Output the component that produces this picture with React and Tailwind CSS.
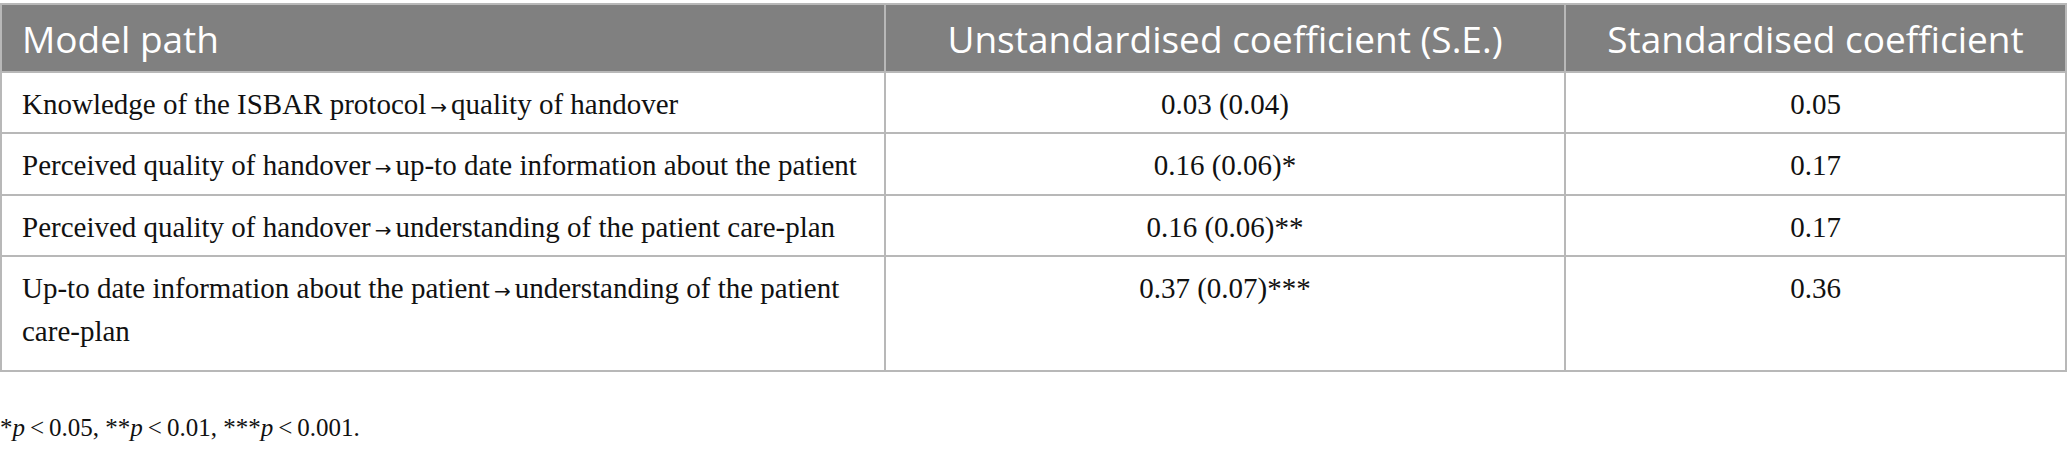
export default function App() {
  const rows = [
    {
      from: "Knowledge of the ISBAR protocol",
      to: "quality of handover",
      coef: "0.03 (0.04)",
      std: "0.05",
      h: "h-[61px]",
    },
    {
      from: "Perceived quality of handover",
      to: "up-to date information about the patient",
      coef: "0.16 (0.06)*",
      std: "0.17",
      h: "h-[62px]",
    },
    {
      from: "Perceived quality of handover",
      to: "understanding of the patient care-plan",
      coef: "0.16 (0.06)**",
      std: "0.17",
      h: "h-[61px]",
    },
    {
      from: "Up-to date information about the patient",
      to: "understanding of the patient care-plan",
      coef: "0.37 (0.07)***",
      std: "0.36",
      h: "h-[115px]",
    },
  ];

  return (
    <div className="w-[2067px] bg-white pt-[3px] font-['Liberation_Serif',serif] text-[#111]">
      <table className="w-full table-fixed border-collapse border-2 border-[#b8b8b8]">
        <colgroup>
          <col className="w-[884px]" />
          <col className="w-[680px]" />
          <col />
        </colgroup>
        <thead>
          <tr className="h-[68px] bg-[#808080] text-white font-['Open_Sans',sans-serif] text-[37px] font-normal">
            <th className="border-2 border-[#b8b8b8] px-[20px] text-left font-normal leading-none">Model path</th>
            <th className="border-2 border-[#b8b8b8] px-[20px] text-center font-normal leading-none">
              Unstandardised coefficient (S.E.)
            </th>
            <th className="border-2 border-[#b8b8b8] px-[20px] text-center font-normal leading-none">
              Standardised coefficient
            </th>
          </tr>
        </thead>
        <tbody className="text-[29px] leading-[43px]">
          {rows.map((r, i) => (
            <tr key={i} className={r.h}>
              <td className="border-2 border-[#b8b8b8] px-[20px] pt-[10px] align-top">
                {r.from}
                <span className="font-['DejaVu_Sans',sans-serif] text-[20px] leading-[20px] px-[4px]">{"\u2192"}</span>
                {r.to}
              </td>
              <td className="border-2 border-[#b8b8b8] pt-[10px] text-center align-top">{r.coef}</td>
              <td className="border-2 border-[#b8b8b8] pt-[10px] text-center align-top">{r.std}</td>
            </tr>
          ))}
        </tbody>
      </table>
      <p className="mt-[40px] text-[25px] leading-[32px]">
        *<i>p</i>{"\u2009<\u2009"}0.05, **<i>p</i>{"\u2009<\u2009"}0.01, ***<i>p</i>{"\u2009<\u2009"}0.001.
      </p>
    </div>
  );
}
